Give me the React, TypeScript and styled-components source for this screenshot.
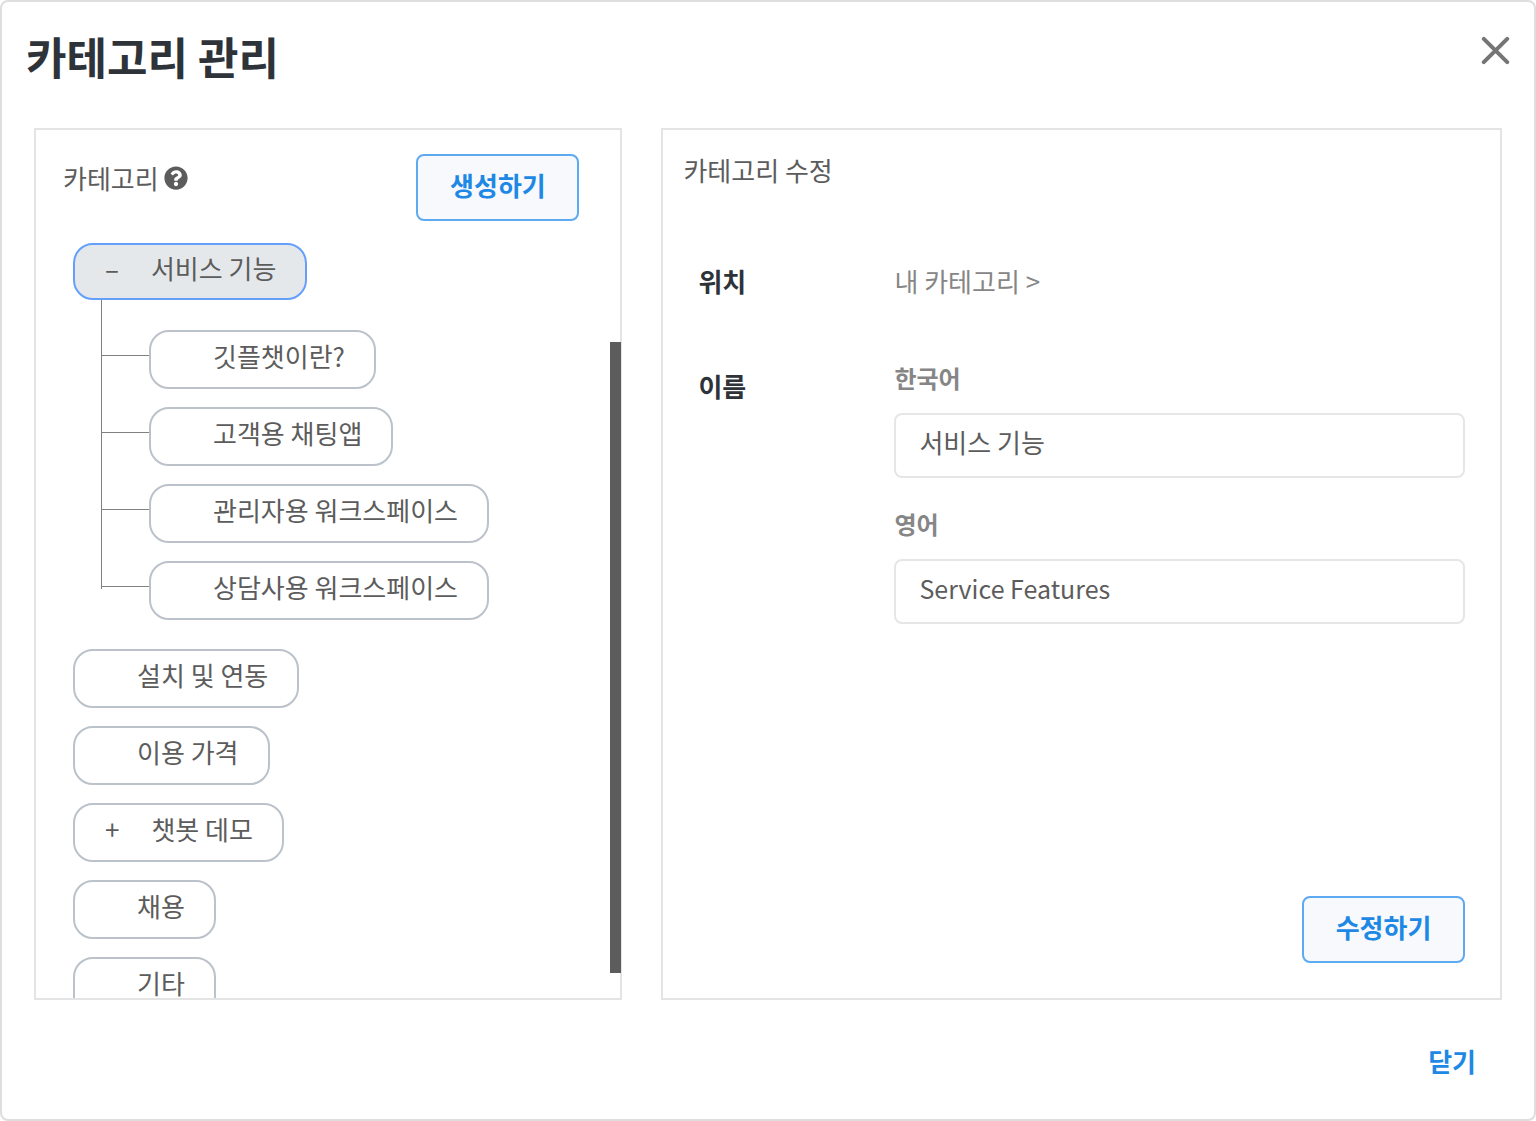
import React, { useState } from "react";
import styled, { createGlobalStyle } from "styled-components";
import { FaQuestionCircle } from "react-icons/fa";

const GlobalStyle = createGlobalStyle`
  *, *::before, *::after { box-sizing: border-box; }
  body {
    margin: 0;
    background: #fff;
    color: #5c5c5c;
    font-family: "Noto Sans CJK KR", "Noto Sans", sans-serif;
    font-size: 26px;
    line-height: 36px;
  }
  button, input { font: inherit; color: inherit; }
  button { cursor: pointer; }
  ul { list-style: none; margin: 0; padding: 0; }
`;

const Modal = styled.section`
  display: flex;
  flex-direction: column;
  height: 100vh;
  padding: 0 32px;
  border: 2px solid #dedede;
  border-radius: 8px;
  background: #fff;
`;

const ModalHeader = styled.header`
  display: flex;
  justify-content: space-between;
  align-items: flex-start;
  height: 126px;
  margin: 0 -8px;
  padding-top: 22px;
`;

const ModalTitle = styled.h1`
  margin: 0;
  color: #2d3339;
  font-size: 44px;
  line-height: 64px;
  font-weight: 700;
`;

const CloseIconButton = styled.button`
  display: flex;
  padding: 12px 0;
  border: 0;
  background: none;
  color: #757575;
`;

const Panels = styled.div`
  display: grid;
  grid-template-columns: 7fr 10fr;
  gap: 39px;
  flex: 1;
  min-height: 0;
`;

const Panel = styled.section`
  position: relative;
  display: flex;
  flex-direction: column;
  min-width: 0;
  min-height: 0;
  border: 2px solid #e4e4e4;
`;

const TreeHeader = styled.div`
  display: flex;
  justify-content: space-between;
  align-items: flex-start;
  padding: 24px 41px 22px 27px;
`;

const TreeTitle = styled.h2`
  display: flex;
  align-items: center;
  gap: 5px;
  margin: 0;
  font-size: 26px;
  line-height: 48px;
  font-weight: 400;
`;

const OutlineButton = styled.button`
  width: 163px;
  height: 67px;
  padding: 0 0 6px;
  border: 2px solid #5eaaf0;
  border-radius: 8px;
  background: #f7f9fc;
  color: #1e88e5;
  font-weight: 700;
`;

const TreeScroll = styled.div`
  flex: 1;
  min-height: 0;
  padding: 0 37px;
  overflow-y: auto;
  scrollbar-width: none;
`;

const ScrollThumb = styled.div`
  position: absolute;
  top: 212px;
  right: -1px;
  bottom: 25px;
  width: 11px;
  background: #5c5c5c;
`;

const TreeList = styled.ul`
  display: flex;
  flex-direction: column;
  gap: 18px;
`;

const TreeItem = styled.li`
  display: flex;
  flex-direction: column;
  align-items: flex-start;
`;

const Pill = styled.button<{ $selected: boolean }>`
  display: flex;
  align-items: center;
  gap: 32px;
  height: ${(p) => (p.$selected ? "57px" : "59px")};
  padding: 0 29px 8px 30px;
  border: 2px solid ${(p) => (p.$selected ? "#64a0fa" : "#bbc2ca")};
  border-radius: 20px;
  background: ${(p) => (p.$selected ? "#e5e8eb" : "#fff")};
  white-space: nowrap;
`;

const ChildList = styled.ul`
  position: relative;
  display: flex;
  flex-direction: column;
  gap: 18px;
  margin: 30px 0 11px 28px;

  &::before {
    content: "";
    position: absolute;
    top: -30px;
    bottom: 31px;
    left: 0;
    width: 1px;
    background: #808080;
  }
`;

const ChildItem = styled.li`
  display: flex;

  &::before {
    content: "";
    width: 48px;
    height: 1px;
    margin-top: 25px;
    background: #808080;
  }
`;

const EditTitle = styled.h2`
  margin: 0;
  padding: 22px 20px 0;
  font-size: 26px;
  line-height: 36px;
  font-weight: 400;
`;

const EditForm = styled.form`
  display: flex;
  flex-direction: column;
  flex: 1;
  gap: 61px;
  padding: 75px 35px 35px;
`;

const FormRow = styled.div`
  display: grid;
  grid-template-columns: 196px 1fr;
`;

const RowLabel = styled.span<{ $offset?: boolean }>`
  padding-top: ${(p) => (p.$offset ? "8px" : "0")};
  color: #2d3339;
  font-weight: 700;
`;

const Path = styled.span`
  color: #868686;
`;

const Fields = styled.div`
  display: flex;
  flex-direction: column;
  gap: 28px;
`;

const Field = styled.label`
  display: flex;
  flex-direction: column;
  gap: 17px;
  color: #868686;
  font-size: 24px;
  font-weight: 700;
`;

const TextInput = styled.input`
  width: 100%;
  height: 65px;
  padding: 0 23px 8px;
  border: 2px solid #e6e6e6;
  border-radius: 8px;
  outline: 0;
  background: #fff;
  color: #5c5c5c;
  font-size: 26px;
  font-weight: 400;

  &:lang(en) {
    font-size: 25px;
  }
`;

const FormActions = styled.div`
  display: flex;
  justify-content: flex-end;
  margin-top: auto;
`;

const ModalFooter = styled.footer`
  display: flex;
  justify-content: flex-end;
  padding: 37px 26px 34px;
`;

const TextButton = styled.button`
  padding: 0;
  border: 0;
  background: none;
  color: #1e88e5;
  line-height: 48px;
  font-weight: 700;
`;

interface Category {
  name: string;
  english: string;
  toggle?: string;
  children?: Category[];
}

const categories: Category[] = [
  {
    name: "서비스 기능",
    english: "Service Features",
    toggle: "–",
    children: [
      { name: "깃플챗이란?", english: "" },
      { name: "고객용 채팅앱", english: "" },
      { name: "관리자용 워크스페이스", english: "" },
      { name: "상담사용 워크스페이스", english: "" },
    ],
  },
  { name: "설치 및 연동", english: "" },
  { name: "이용 가격", english: "" },
  { name: "챗봇 데모", english: "", toggle: "+" },
  { name: "채용", english: "" },
  { name: "기타", english: "" },
];

export default function App() {
  const [selected, setSelected] = useState(categories[0].name);
  const [korean, setKorean] = useState(categories[0].name);
  const [english, setEnglish] = useState(categories[0].english);

  const select = (category: Category) => {
    setSelected(category.name);
    setKorean(category.name);
    setEnglish(category.english);
  };

  const renderPill = (category: Category) => (
    <Pill
      type="button"
      $selected={selected === category.name}
      onClick={() => select(category)}
    >
      <span>{category.toggle}</span>
      <span>{category.name}</span>
    </Pill>
  );

  return (
    <>
      <GlobalStyle />
      <Modal role="dialog" aria-labelledby="modal-title">
        <ModalHeader>
          <ModalTitle id="modal-title">카테고리 관리</ModalTitle>
          <CloseIconButton type="button" aria-label="닫기">
            <svg width="29" height="29" viewBox="0 0 29 29" aria-hidden="true">
              <path
                d="M2.8 2.8 26.2 26.2M26.2 2.8 2.8 26.2"
                fill="none"
                stroke="currentColor"
                strokeWidth="4"
                strokeLinecap="round"
              />
            </svg>
          </CloseIconButton>
        </ModalHeader>
        <Panels>
          <Panel>
            <TreeHeader>
              <TreeTitle>
                카테고리
                <FaQuestionCircle size={24} aria-hidden="true" />
              </TreeTitle>
              <OutlineButton type="button">생성하기</OutlineButton>
            </TreeHeader>
            <TreeScroll>
              <TreeList>
                {categories.map((category) => (
                  <TreeItem key={category.name}>
                    {renderPill(category)}
                    {category.children && (
                      <ChildList>
                        {category.children.map((child) => (
                          <ChildItem key={child.name}>{renderPill(child)}</ChildItem>
                        ))}
                      </ChildList>
                    )}
                  </TreeItem>
                ))}
              </TreeList>
            </TreeScroll>
            <ScrollThumb />
          </Panel>
          <Panel>
            <EditTitle>카테고리 수정</EditTitle>
            <EditForm onSubmit={(event) => event.preventDefault()}>
              <FormRow>
                <RowLabel>위치</RowLabel>
                <Path>내 카테고리 &gt;</Path>
              </FormRow>
              <FormRow>
                <RowLabel $offset>이름</RowLabel>
                <Fields>
                  <Field>
                    한국어
                    <TextInput
                      lang="ko"
                      value={korean}
                      onChange={(e) => setKorean(e.target.value)}
                    />
                  </Field>
                  <Field>
                    영어
                    <TextInput
                      lang="en"
                      value={english}
                      onChange={(e) => setEnglish(e.target.value)}
                    />
                  </Field>
                </Fields>
              </FormRow>
              <FormActions>
                <OutlineButton type="submit">수정하기</OutlineButton>
              </FormActions>
            </EditForm>
          </Panel>
        </Panels>
        <ModalFooter>
          <TextButton type="button">닫기</TextButton>
        </ModalFooter>
      </Modal>
    </>
  );
}
